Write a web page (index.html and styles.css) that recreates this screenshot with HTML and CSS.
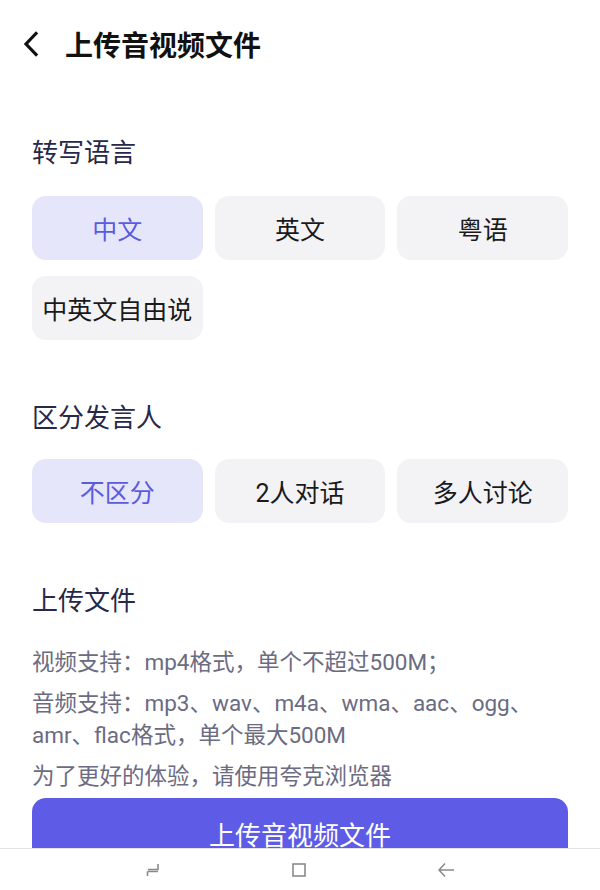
FILE: index.html
```html
<!DOCTYPE html>
<html lang="zh-CN">
<head>
    <meta charset="UTF-8">
    <meta name="viewport" content="width=device-width, initial-scale=1.0">
    <title>上传音视频文件</title>
    <link rel="stylesheet" href="styles.css">
</head>
<body>
    <div class="header">
        <span class="back">
            <svg width="24" height="26" viewBox="0 0 24 26"><path d="M16 2.5 L6 13 L16 23.5" fill="none" stroke="#111" stroke-width="3.2" stroke-linecap="square"/></svg>
        </span>
        <h1>上传音视频文件</h1>
    </div>

    <div class="content">
        <h2 class="section-title">转写语言</h2>
        <div class="chips">
            <div class="chip active">中文</div>
            <div class="chip">英文</div>
            <div class="chip">粤语</div>
            <div class="chip">中英文自由说</div>
        </div>

        <h2 class="section-title">区分发言人</h2>
        <div class="chips">
            <div class="chip active">不区分</div>
            <div class="chip">2人对话</div>
            <div class="chip">多人讨论</div>
        </div>

        <h2 class="section-title">上传文件</h2>
        <div class="tips">
            <p>视频支持：mp4格式，单个不超过500M；</p>
            <p>音频支持：mp3、wav、m4a、wma、aac、ogg、amr、flac格式，单个最大500M</p>
            <p>为了更好的体验，请使用夸克浏览器</p>
        </div>
        <button class="upload-btn">上传音视频文件</button>
    </div>

    <div class="navbar">
        <svg width="16" height="16" viewBox="0 0 16 16"><path d="M13 2 V7.5 H3 M2.5 9.5 H13 M2.5 9.5 V14" fill="none" stroke="#8a8a8a" stroke-width="1.6"/></svg>
        <svg width="16" height="16" viewBox="0 0 16 16"><rect x="2" y="2" width="12" height="12" fill="none" stroke="#8a8a8a" stroke-width="1.6"/></svg>
        <svg width="18" height="16" viewBox="0 0 18 16"><path d="M8 1.5 L2 8 L8 14.5 M2 8 H17" fill="none" stroke="#8a8a8a" stroke-width="1.5"/></svg>
    </div>
</body>
</html>
```

FILE: styles.css
```css
body {
    font-family: Roboto, "Noto Sans CJK SC", sans-serif;
    background-color: #ffffff;
    margin: 0;
    padding: 0;
    color: #1a1a1a;
}
.header {
    height: 88px;
    display: flex;
    align-items: center;
    padding-left: 20px;
}
.back {
    display: flex;
    width: 24px;
    height: 26px;
    margin-right: 21px;
}
.header h1 {
    margin: 0;
    font-size: 28px;
    font-weight: bold;
    color: #111;
}
.content {
    padding: 0 32px;
}
.section-title {
    margin: 60px 0 23px;
    font-size: 26px;
    font-weight: normal;
    line-height: 36px;
    color: #27284a;
}
.content > .section-title:first-child {
    margin: 47px 0 25px;
}
.chips {
    display: grid;
    grid-template-columns: 1fr 1fr 1fr;
    gap: 16px 12px;
}
.chip {
    height: 64px;
    display: flex;
    align-items: center;
    justify-content: center;
    background-color: #f3f3f6;
    border-radius: 14px;
    font-size: 25px;
    color: #1a1a1a;
    white-space: nowrap;
}
.chip.active {
    background-color: #e6e6fb;
    color: #5b5be0;
}
.tips {
    margin-top: 27px;
}
.tips p {
    margin: 0 0 9px;
    font-size: 22.5px;
    line-height: 32px;
    color: #6b6b82;
}
.upload-btn {
    width: 100%;
    height: 70px;
    margin-top: -3px;
    background-color: #5e5ce6;
    color: #fff;
    border: none;
    border-radius: 14px;
    font-family: inherit;
    font-size: 26px;
    cursor: pointer;
}
.navbar {
    position: fixed;
    left: 0;
    right: 0;
    bottom: 0;
    height: 41px;
    background-color: #fff;
    border-top: 1px solid #e4e4e4;
    display: flex;
    align-items: center;
    justify-content: center;
    gap: 130px;
}
```
